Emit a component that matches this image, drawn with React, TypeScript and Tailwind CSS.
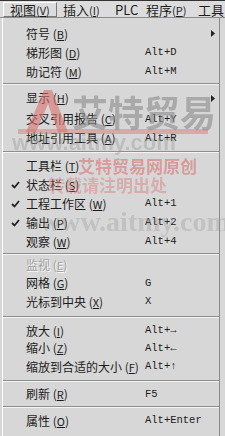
import * as React from "react"

type Item =
    | { kind: "sep"; h: number }
    | { kind: "row"; h: number; label: string; key?: string; tail?: string; shortcut?: string; check?: boolean; arrow?: boolean; disabled?: boolean }

const items: Item[] = [
    { kind: "row", h: 19, label: "符号 (", key: "B", tail: ")", arrow: true },
    { kind: "row", h: 19, label: "梯形图 (", key: "D", tail: ")", shortcut: "Alt+D" },
    { kind: "row", h: 19, label: "助记符 (", key: "M", tail: ")", shortcut: "Alt+M" },
    { kind: "sep", h: 6 },
    { kind: "row", h: 22, label: "显示 (", key: "H", tail: ")", arrow: true },
    { kind: "row", h: 20, label: "交叉引用报告 (", key: "C", tail: ")", shortcut: "Alt+Y" },
    { kind: "row", h: 18, label: "地址引用工具 (", key: "A", tail: ")", shortcut: "Alt+R" },
    { kind: "sep", h: 9 },
    { kind: "row", h: 19, label: "工具栏 (", key: "T", tail: ")" },
    { kind: "row", h: 19, label: "状态栏 (", key: "S", tail: ")", check: true },
    { kind: "row", h: 19, label: "工程工作区 (", key: "W", tail: ")", shortcut: "Alt+1", check: true },
    { kind: "row", h: 19, label: "输出 (", key: "P", tail: ")", shortcut: "Alt+2", check: true },
    { kind: "row", h: 19, label: "观察 (", key: "W", tail: ")", shortcut: "Alt+4" },
    { kind: "sep", h: 5 },
    { kind: "row", h: 18, label: "监视 (", key: "E", tail: ")", disabled: true },
    { kind: "row", h: 18, label: "网格 (", key: "G", tail: ")", shortcut: "G" },
    { kind: "row", h: 19, label: "光标到中央 (", key: "X", tail: ")", shortcut: "X" },
    { kind: "sep", h: 11 },
    { kind: "row", h: 17, label: "放大 (", key: "I", tail: ")", shortcut: "Alt+→" },
    { kind: "row", h: 18, label: "缩小 (", key: "Z", tail: ")", shortcut: "Alt+←" },
    { kind: "row", h: 19, label: "缩放到合适的大小 (", key: "F", tail: ")", shortcut: "Alt+↑" },
    { kind: "sep", h: 9 },
    { kind: "row", h: 18, label: "刷新 (", key: "R", tail: ")", shortcut: "F5" },
    { kind: "sep", h: 8 },
    { kind: "row", h: 19, label: "属性 (", key: "O", tail: ")", shortcut: "Alt+Enter" },
]

const cjk = { fontFamily: '"Noto Sans CJK SC", "Noto Sans", sans-serif' }
const mono = { fontFamily: '"Liberation Mono", "DejaVu Sans Mono", monospace' }

function Check() {
    return (
        <svg width="9" height="8" viewBox="0 0 9 8" className="shrink-0">
            <path d="M1 4 L3.5 6.5 L8 1" stroke="#222" strokeWidth="1.8" fill="none" />
        </svg>
    )
}

function MenuBarItem({ label, k, className }: { label: string; k?: string; className: string }) {
    return (
        <div className={className}>
            <span className="text-[13px] leading-none text-[#1c1c1c] whitespace-nowrap" style={cjk}>
                {label}
                {k && (
                    <span className="text-[11px]">
                        (<u>{k}</u>)
                    </span>
                )}
            </span>
        </div>
    )
}

export default function App() {
    return (
        <div className="relative w-[225px] h-[436px] overflow-hidden bg-[#d7d7d7]">
            {/* menu bar */}
            <div className="flex h-[18px] items-stretch border-t border-t-[#333] border-b border-b-[#8c8c8c] bg-[#dcdcdc] pl-[3px] pt-px">
                <MenuBarItem label="视图" k="V" className="flex h-full w-[54px] shrink-0 items-center pl-[6px] border border-t-white border-l-white border-r-[#7a7a7a] border-b-[#7a7a7a]" />
                <MenuBarItem label="插入" k="I" className="flex h-full w-[54px] shrink-0 items-center pl-[6px]" />
                <MenuBarItem label="PLC" className="flex h-full w-[31px] shrink-0 items-center pl-[4px]" />
                <MenuBarItem label="程序" k="P" className="flex h-full w-[52px] shrink-0 items-center pl-[4px]" />
                <MenuBarItem label="工具" className="flex h-full shrink-0 items-center pl-[4px]" />
            </div>

            {/* dropdown panel */}
            <div className="ml-[2px] mr-[5px] h-[418px] border-l border-l-white border-r border-r-[#8a8a8a] pt-[6px]">
                {items.map((it, i) =>
                    it.kind === "sep" ? (
                        <div key={i} className="flex flex-col justify-center" style={{ height: it.h }}>
                            <div className="h-px bg-[#8e8e8e]" />
                            <div className="h-px bg-[#f4f4f4]" />
                        </div>
                    ) : (
                        <div key={i} className="flex items-center" style={{ height: it.h }}>
                            <div className="flex w-[23px] shrink-0 justify-center pl-[2px]">{it.check && <Check />}</div>
                            <div
                                className={
                                    it.disabled
                                        ? "flex-1 whitespace-nowrap text-[12px] leading-none text-[#a0a0a0] [text-shadow:1px_1px_0_#f8f8f8]"
                                        : "flex-1 whitespace-nowrap text-[12px] leading-none text-[#1c1c1c]"
                                }
                                style={cjk}
                            >
                                {it.label}
                                <u className="text-[11px]">{it.key}</u>
                                {it.tail}
                            </div>
                            <div className="w-[66px] shrink-0 whitespace-nowrap text-[10.5px] leading-none text-[#1c1c1c]" style={mono}>
                                {it.shortcut}
                            </div>
                            <div className="flex w-[8px] shrink-0 justify-start">
                                {it.arrow && (
                                    <svg width="4" height="7" viewBox="0 0 4 7">
                                        <path d="M0 0 L4 3.5 L0 7 Z" fill="#222" />
                                    </svg>
                                )}
                            </div>
                        </div>
                    )
                )}
            </div>

            {/* watermark */}
            <div className="pointer-events-none absolute left-[22px] top-[88px] flex items-center gap-[2px] opacity-60">
                <svg width="48" height="46" viewBox="0 0 48 46">
                    <path d="M4 44 L22 2 L30 2 L46 44 L36 44 L26 16 L14 44 Z" fill="#d9706f" />
                </svg>
                <span className="text-[36px] font-bold leading-none text-[#8c8c8c]" style={cjk}>艾特贸易</span>
            </div>
            <div className="pointer-events-none absolute left-[18px] top-[129px] h-[5px] w-[190px] bg-[#d9706f] opacity-45" />
            <div className="pointer-events-none absolute left-[12px] top-[132px] text-[22px] font-bold leading-none text-[#8f8f8f] opacity-35" style={{ fontFamily: '"Liberation Sans", sans-serif' }}>
                www.aitmy.com
            </div>
            <div className="pointer-events-none absolute left-[78px] top-[157px] text-[17px] font-bold leading-none text-[#d97a7a] opacity-65" style={cjk}>
                艾特贸易网原创
            </div>
            <div className="pointer-events-none absolute left-[48px] top-[176px] text-[17px] font-bold leading-none text-[#d97a7a] opacity-45" style={cjk}>
                转载请注明出处
            </div>
            <div className="pointer-events-none absolute left-[40px] top-[208px] text-[28px] font-bold leading-none text-[#8f8f8f] opacity-30" style={{ fontFamily: '"Liberation Serif", serif' }}>
                www.aitmy.com
            </div>
        </div>
    )
}
